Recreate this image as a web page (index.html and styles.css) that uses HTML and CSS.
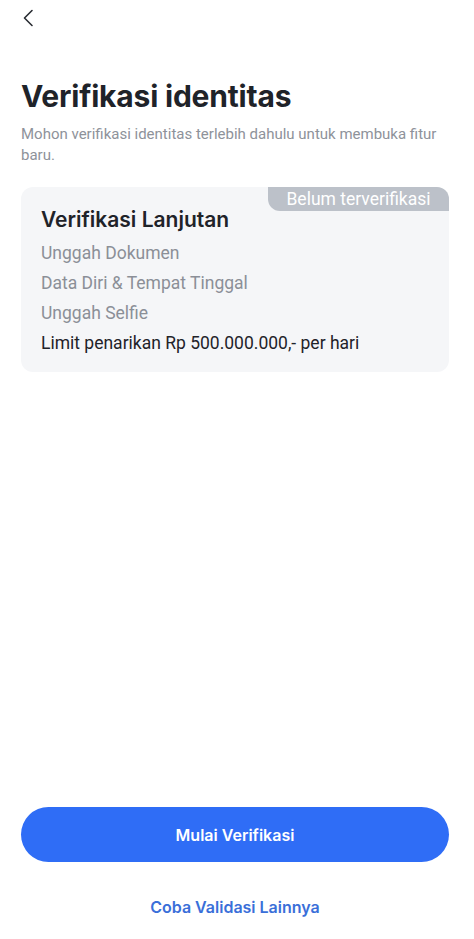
FILE: index.html
```html
<!DOCTYPE html>
<html>
<head>
  <title>Verifikasi identitas</title>
  <link rel="stylesheet" href="styles.css">
</head>
<body>

  <div class="page">
    <div class="topbar">
      <svg class="back" width="12" height="18" viewBox="0 0 12 18">
        <path d="M10 1.5 L2.5 9 L10 16.5" fill="none" stroke="#2a2d33" stroke-width="1.6" stroke-linecap="round" stroke-linejoin="round"/>
      </svg>
    </div>

    <h1 class="title">Verifikasi identitas</h1>
    <p class="subtitle">Mohon verifikasi identitas terlebih dahulu untuk membuka fitur baru.</p>

    <div class="card">
      <div class="badge">Belum terverifikasi</div>
      <h2 class="card-title">Verifikasi Lanjutan</h2>
      <div class="item">Unggah Dokumen</div>
      <div class="item">Data Diri &amp; Tempat Tinggal</div>
      <div class="item">Unggah Selfie</div>
      <div class="item limit">Limit penarikan Rp 500.000.000,- per hari</div>
    </div>

    <div class="spacer"></div>

    <button class="primary">Mulai Verifikasi</button>
    <a class="link">Coba Validasi Lainnya</a>
  </div>

</body>
</html>
```

FILE: styles.css
```css
body {
  margin: 0;
  background: #ffffff;
  font-family: Roboto, "Noto Sans", sans-serif;
  color: #1f2329;
}

.page {
  min-height: 939px;
  display: flex;
  flex-direction: column;
  padding: 0 25px 0 21px;
  box-sizing: border-box;
}

.topbar {
  height: 44px;
  display: flex;
  align-items: flex-start;
  padding-top: 9px;
  box-sizing: border-box;
}

.back {
  margin-left: 1px;
}

.title {
  margin: 32px 0 0;
  font-family: Inter, sans-serif;
  font-size: 30px;
  line-height: 40px;
  font-weight: 700;
  color: #1f2329;
  letter-spacing: -0.2px;
}

.subtitle {
  margin: 8px 0 0;
  font-size: 15px;
  line-height: 21px;
  color: #8e929a;
}

.card {
  position: relative;
  margin-top: 21px;
  background: #f5f6f8;
  border-radius: 12px;
  padding: 19px 20px 14px;
}

.badge {
  position: absolute;
  top: 0;
  right: 0;
  width: 181px;
  height: 24px;
  line-height: 24px;
  text-align: center;
  background: #bcc1c9;
  color: #ffffff;
  font-size: 17.5px;
  border-radius: 0 12px 0 12px;
}

.card-title {
  margin: 0 0 4px;
  font-family: Inter, sans-serif;
  font-size: 21px;
  line-height: 28px;
  font-weight: 600;
  color: #1f2329;
}

.item {
  font-size: 17.5px;
  line-height: 30px;
  color: #8b8f97;
}

.item.limit {
  color: #1f2329;
}

.spacer {
  flex: 1;
}

.primary {
  height: 55px;
  border: none;
  border-radius: 28px;
  background: #2f6df6;
  color: #ffffff;
  font-family: Inter, sans-serif;
  font-size: 16px;
  font-weight: 600;
}

.link {
  display: block;
  margin: 35px 0 22px;
  text-align: center;
  font-family: Inter, sans-serif;
  font-size: 16px;
  line-height: 20px;
  font-weight: 600;
  color: #3a6fd9;
}
```
